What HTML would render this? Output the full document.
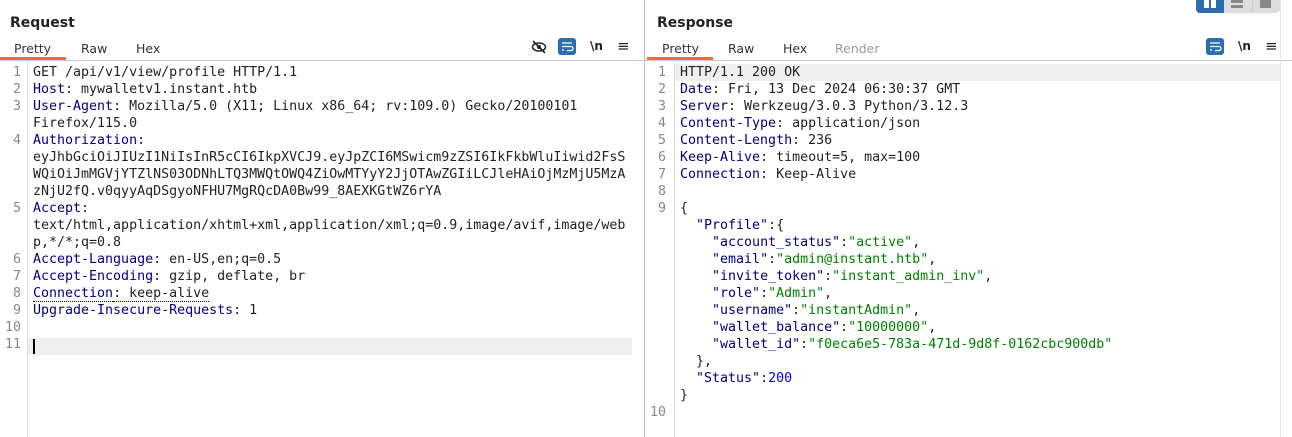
<!DOCTYPE html>
<html><head><meta charset="utf-8"><style>
*{margin:0;padding:0;box-sizing:border-box}
body{width:1292px;height:437px;background:#fff;position:relative;overflow:hidden;font-family:"DejaVu Sans","Liberation Sans",sans-serif;color:#222}
.abs{position:absolute}
.title{font-weight:bold;font-size:14px;top:15px}
.tab{font-size:12.5px;top:41px;color:#333}
.code{font-family:"DejaVu Sans Mono","Liberation Mono",monospace;font-size:13.3px;line-height:17px;white-space:pre;color:#222}
.num{font-family:"DejaVu Sans Mono",monospace;font-size:13.3px;line-height:17px;color:#888;text-align:right;white-space:pre}
.k{color:#000080}
.s{color:#008000}
.n{color:#0000ee}
</style></head><body>
<div class="abs title" style="left:10px">Request</div>
<div class="abs tab" style="left:14px">Pretty</div>
<div class="abs tab" style="left:81px">Raw</div>
<div class="abs tab" style="left:136px">Hex</div>
<div class="abs" style="left:0;top:57px;width:66px;height:3px;background:#f06a3a"></div>
<div class="abs" style="left:0;top:60px;width:644px;height:1px;background:#ccc"></div>
<svg class="abs" style="left:531px;top:39px" width="16" height="16" viewBox="0 0 16 16"><ellipse cx="8" cy="8" rx="6.5" ry="4" fill="none" stroke="#222" stroke-width="1.5"/><circle cx="8" cy="8" r="2" fill="#222"/><line x1="2" y1="2" x2="14" y2="14" stroke="#222" stroke-width="1.6"/></svg>
<div class="abs" style="left:558px;top:38px;width:18px;height:17px;background:#2d6cad;border-radius:3px"></div>
<svg class="abs" style="left:558px;top:38px" width="18" height="17" viewBox="0 0 18 17"><path d="M4 5h10M4 8.5h9a2 2 0 0 1 0 4H9M4 12h2" stroke="#fff" stroke-width="1.3" fill="none"/></svg>
<div class="abs" style="left:590px;top:39px;font-size:12px;font-weight:bold;color:#222">\n</div>
<div class="abs" style="left:617px;top:37px;font-size:15px;color:#222">≡</div>
<div class="abs" style="left:27px;top:61px;width:1px;height:376px;background:#ddd"></div>
<div class="abs" style="left:28px;top:338px;width:604px;height:17px;background:#efefef"></div>
<div class="abs" style="left:33px;top:339px;width:2px;height:15px;background:#000"></div>
<div class="abs num" style="left:0;top:64px;width:21px">1
2
3

4



5


6
7
8
9
10
11</div>
<div class="abs code" style="left:33px;top:64px">GET /api/v1/view/profile HTTP/1.1
<span class="k">Host</span>: mywalletv1.instant.htb
<span class="k">User-Agent</span>: Mozilla/5.0 (X11; Linux x86_64; rv:109.0) Gecko/20100101
Firefox/115.0
<span class="k">Authorization</span>:
eyJhbGciOiJIUzI1NiIsInR5cCI6IkpXVCJ9.eyJpZCI6MSwicm9zZSI6IkFkbWluIiwid2FsS
WQiOiJmMGVjYTZlNS03ODNhLTQ3MWQtOWQ4ZiOwMTYyY2JjOTAwZGIiLCJleHAiOjMzMjU5MzA
zNjU2fQ.v0qyyAqDSgyoNFHU7MgRQcDA0Bw99_8AEXKGtWZ6rYA
<span class="k">Accept</span>:
text/html,application/xhtml+xml,application/xml;q=0.9,image/avif,image/web
p,*/*;q=0.8
<span class="k">Accept-Language</span>: en-US,en;q=0.5
<span class="k">Accept-Encoding</span>: gzip, deflate, br
<span class="k" style="border-bottom:1px dotted #000080">Connection</span><span style="border-bottom:1px dotted #000080">: keep-alive</span>
<span class="k">Upgrade-Insecure-Requests</span>: 1</div>
<div class="abs" style="left:644px;top:0;width:1px;height:437px;background:#bbb"></div>
<div class="abs title" style="left:657px">Response</div>
<div class="abs tab" style="left:662px">Pretty</div>
<div class="abs tab" style="left:728px">Raw</div>
<div class="abs tab" style="left:783px">Hex</div>
<div class="abs tab" style="left:835px;color:#999">Render</div>
<div class="abs" style="left:647px;top:57px;width:66px;height:3px;background:#f06a3a"></div>
<div class="abs" style="left:645px;top:60px;width:647px;height:1px;background:#ccc"></div>
<div class="abs" style="left:1206px;top:38px;width:18px;height:17px;background:#2d6cad;border-radius:3px"></div>
<svg class="abs" style="left:1206px;top:38px" width="18" height="17" viewBox="0 0 18 17"><path d="M4 5h10M4 8.5h9a2 2 0 0 1 0 4H9M4 12h2" stroke="#fff" stroke-width="1.3" fill="none"/></svg>
<div class="abs" style="left:1238px;top:39px;font-size:12px;font-weight:bold;color:#222">\n</div>
<div class="abs" style="left:1265px;top:37px;font-size:15px;color:#222">≡</div>
<div class="abs" style="left:1196px;top:0;width:84px;height:13px;background:#ddd;border-radius:0 0 4px 4px"></div>
<div class="abs" style="left:1196px;top:0;width:28px;height:13px;background:#2d6cad;border-radius:0 0 0 4px"></div>
<div class="abs" style="left:1204px;top:0;width:5px;height:8px;background:#fff"></div>
<div class="abs" style="left:1211px;top:0;width:5px;height:8px;background:#fff"></div>
<div class="abs" style="left:1231px;top:0;width:12px;height:3px;background:#888"></div>
<div class="abs" style="left:1231px;top:5px;width:12px;height:3px;background:#888"></div>
<div class="abs" style="left:1252px;top:0;width:1px;height:13px;background:#ccc"></div>
<div class="abs" style="left:1260px;top:0;width:11px;height:8px;background:#888"></div>
<div class="abs" style="left:674px;top:61px;width:1px;height:376px;background:#ddd"></div>
<div class="abs" style="left:675px;top:64px;width:605px;height:17px;background:#efefef"></div>
<div class="abs num" style="left:645px;top:64px;width:21px">1
2
3
4
5
6
7
8
9











10</div>
<div class="abs code" style="left:680px;top:64px">HTTP/1.1 200 OK
<span class="k">Date</span>: Fri, 13 Dec 2024 06:30:37 GMT
<span class="k">Server</span>: Werkzeug/3.0.3 Python/3.12.3
<span class="k">Content-Type</span>: application/json
<span class="k">Content-Length</span>: 236
<span class="k">Keep-Alive</span>: timeout=5, max=100
<span class="k">Connection</span>: Keep-Alive

{
  <span class="k">"Profile"</span>:{
    <span class="k">"account_status"</span>:<span class="s">"active"</span>,
    <span class="k">"email"</span>:<span class="s">"admin@instant.htb"</span>,
    <span class="k">"invite_token"</span>:<span class="s">"instant_admin_inv"</span>,
    <span class="k">"role"</span>:<span class="s">"Admin"</span>,
    <span class="k">"username"</span>:<span class="s">"instantAdmin"</span>,
    <span class="k">"wallet_balance"</span>:<span class="s">"10000000"</span>,
    <span class="k">"wallet_id"</span>:<span class="s">"f0eca6e5-783a-471d-9d8f-0162cbc900db"</span>
  },
  <span class="k">"Status"</span>:<span class="n">200</span>
}</div>
<div class="abs" style="left:1280px;top:0;width:1px;height:437px;background:#e4e4e4"></div>
</body></html>
